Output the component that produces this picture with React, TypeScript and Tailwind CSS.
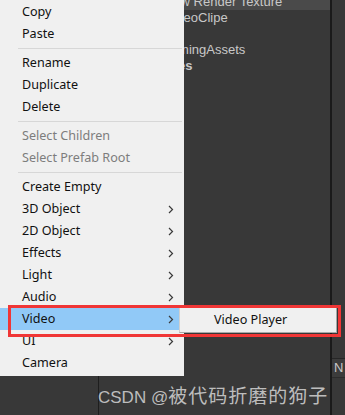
import React from "react";

type Item =
  | { kind: "item"; label: string; disabled?: boolean; sub?: boolean; active?: boolean }
  | { kind: "sep" };

const items: Item[] = [
  { kind: "item", label: "Copy" },
  { kind: "item", label: "Paste" },
  { kind: "sep" },
  { kind: "item", label: "Rename" },
  { kind: "item", label: "Duplicate" },
  { kind: "item", label: "Delete" },
  { kind: "sep" },
  { kind: "item", label: "Select Children", disabled: true },
  { kind: "item", label: "Select Prefab Root", disabled: true },
  { kind: "sep" },
  { kind: "item", label: "Create Empty" },
  { kind: "item", label: "3D Object", sub: true },
  { kind: "item", label: "2D Object", sub: true },
  { kind: "item", label: "Effects", sub: true },
  { kind: "item", label: "Light", sub: true },
  { kind: "item", label: "Audio", sub: true },
  { kind: "item", label: "Video", sub: true, active: true },
  { kind: "item", label: "UI", sub: true },
  { kind: "item", label: "Camera" },
];

function Chevron() {
  return (
    <svg width="6" height="9" viewBox="0 0 6 9" className="absolute left-[168px] top-[7px]">
      <polyline points="1,1 4.5,4.5 1,8" fill="none" stroke="#3a3a3a" strokeWidth="1.2" />
    </svg>
  );
}

export default function App() {
  return (
    <div className="relative w-[345px] h-[415px] overflow-hidden bg-[#383838]">
      {/* background editor panels */}
      <div className="flex h-full">
        <div className="w-[98px]" />
        <div className="w-px bg-[#1e1e1e]" />
        <div className="w-[231px] flex flex-col mt-[-6px] text-[13px] text-[#c8c8c8] [font-family:'Liberation_Sans',Arial,sans-serif]">
          <div className="h-4 leading-4 pl-[65px] bg-[#4a4a4a] whitespace-nowrap">New Render Texture</div>
          <div className="h-4 leading-4 pl-[66px] whitespace-nowrap">VideoClipe</div>
          <div className="h-4" />
          <div className="h-4 leading-4 pl-[48px] whitespace-nowrap">StreamingAssets</div>
          <div className="h-4 leading-4 pl-[48px] whitespace-nowrap font-semibold">Scenes</div>
        </div>
        <div className="w-[2px] bg-[#1a1a1a]" />
        <div className="flex-1 flex flex-col">
          <div className="h-[358px]" />
          <div className="h-[20px] border-t border-[#262626] border-b border-b-[#2c2c2c] bg-[#3c3c3c] pl-[2px] text-[13px] leading-[18px] text-[#c8c8c8] [font-family:'Liberation_Sans',Arial,sans-serif]">
            N
          </div>
        </div>
      </div>

      {/* context menu */}
      <div className="absolute left-0 top-0 w-[184px] h-[376px] bg-[#f0f0f0] pt-px pb-[2px] text-[12.6px] [font-family:'Noto_Sans','Open_Sans',sans-serif]">
        {items.map((it, i) =>
          it.kind === "sep" ? (
            <div key={i} className="h-[7px] pt-[3px] pl-[18px] pr-[2px]">
              <div className="h-px bg-[#d7d7d7]" />
            </div>
          ) : (
            <div
              key={i}
              className={
                "relative h-[22px] leading-[22px] pl-[22px] w-[179px] " +
                (it.active ? "bg-[#91c9f7] " : "") +
                (it.disabled ? "text-[#7d7d7d]" : "text-[#111111]")
              }
            >
              {it.label}
              {it.sub && <Chevron />}
            </div>
          )
        )}
      </div>

      {/* submenu */}
      <div className="absolute left-[179px] top-[307px] w-[158px] h-[26px] bg-[#f0f0f0] border border-[#d0d0d0] border-r-[#a8a8a8] border-b-[#a8a8a8] pl-[34px] text-[12.6px] leading-[24px] text-[#111111] [font-family:'Noto_Sans','Open_Sans',sans-serif]">
        Video Player
      </div>

      {/* red annotation box */}
      <div className="absolute left-[8px] top-[305px] w-[333px] h-[32px] border-[3px] border-[#f03636]" />

      {/* watermark */}
      <div className="absolute left-[98px] top-[381px] whitespace-nowrap text-[#bdbdbd] leading-[28px]">
        <span className="text-[17px] [font-family:'Liberation_Sans',Arial,sans-serif]">CSDN @</span>
        <span className="text-[19px] tracking-[1px] [font-family:'Noto_Sans_CJK_SC',sans-serif]">被代码折磨的狗子</span>
      </div>
    </div>
  );
}
